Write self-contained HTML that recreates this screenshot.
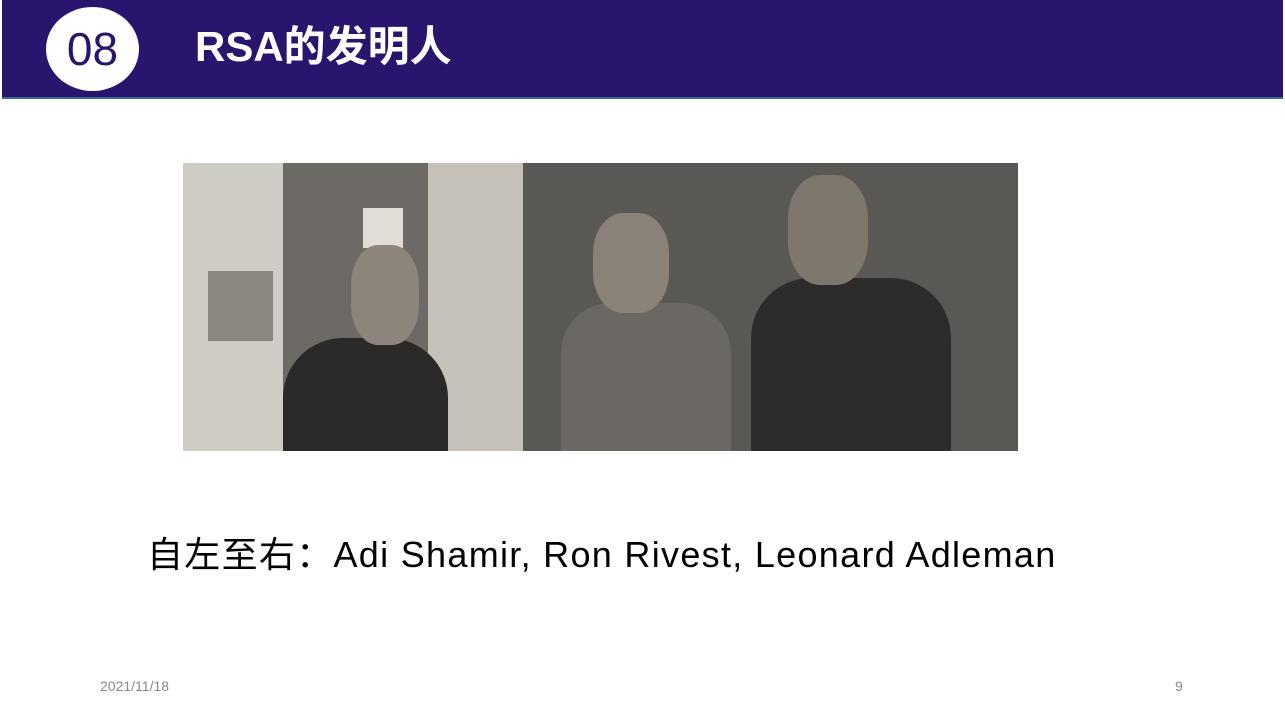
<!DOCTYPE html>
<html><head><meta charset="utf-8"><style>
body{margin:0;width:1285px;height:719px;background:#fff;position:relative;overflow:hidden;font-family:"Liberation Sans","Noto Sans CJK SC",sans-serif}
.bar{position:absolute;left:2px;top:0;width:1281px;height:97px;background:#29146e;border-bottom:2px solid #3a6a9a}
.circ{position:absolute;left:44px;top:7px;width:93px;height:84px;border-radius:50%;background:#fff;color:#29146e;font-size:46px;line-height:84px;text-align:center}
.title{position:absolute;left:193px;top:21px;color:#fff;font-size:42px;font-weight:bold;line-height:52px}
.photo{position:absolute;left:183px;top:163px;width:835px;height:288px;overflow:hidden;background:#a9a49c}
.cap{position:absolute;left:147px;top:526px;font-size:36px;color:#000;white-space:nowrap;letter-spacing:1.3px}
.foot{position:absolute;top:678px;font-size:14px;color:#888}
.r{position:absolute}
</style></head><body>
<div class="bar"><div class="circ">08</div><div class="title">RSA的发明人</div></div>
<div class="photo">
<div class="r" style="left:0;top:0;width:100px;height:288px;background:#cfccc5"></div>
<div class="r" style="left:100px;top:0;width:145px;height:288px;background:#6d6a66"></div>
<div class="r" style="left:245px;top:0;width:95px;height:288px;background:#c6c2ba"></div>
<div class="r" style="left:340px;top:0;width:495px;height:288px;background:#5a5855"></div>
<div class="r" style="left:25px;top:108px;width:65px;height:70px;background:#8a8680"></div>
<div class="r" style="left:180px;top:45px;width:40px;height:40px;background:#e0ddd6"></div>
<div class="r" style="left:100px;top:175px;width:165px;height:113px;background:#2b2a28;border-radius:60px 60px 0 0"></div>
<div class="r" style="left:168px;top:82px;width:68px;height:100px;background:#8d857c;border-radius:40%"></div>
<div class="r" style="left:378px;top:140px;width:170px;height:148px;background:#6b6864;border-radius:50px 50px 0 0"></div>
<div class="r" style="left:410px;top:50px;width:76px;height:100px;background:#8a8279;border-radius:40%"></div>
<div class="r" style="left:568px;top:115px;width:200px;height:173px;background:#2e2c2a;border-radius:60px 60px 0 0"></div>
<div class="r" style="left:605px;top:12px;width:80px;height:110px;background:#7e776e;border-radius:40%"></div>
</div>
<div class="cap">自左至右：Adi Shamir, Ron Rivest, Leonard Adleman</div>
<div class="foot" style="left:100px">2021/11/18</div>
<div class="foot" style="left:1175px">9</div>
</body></html>
